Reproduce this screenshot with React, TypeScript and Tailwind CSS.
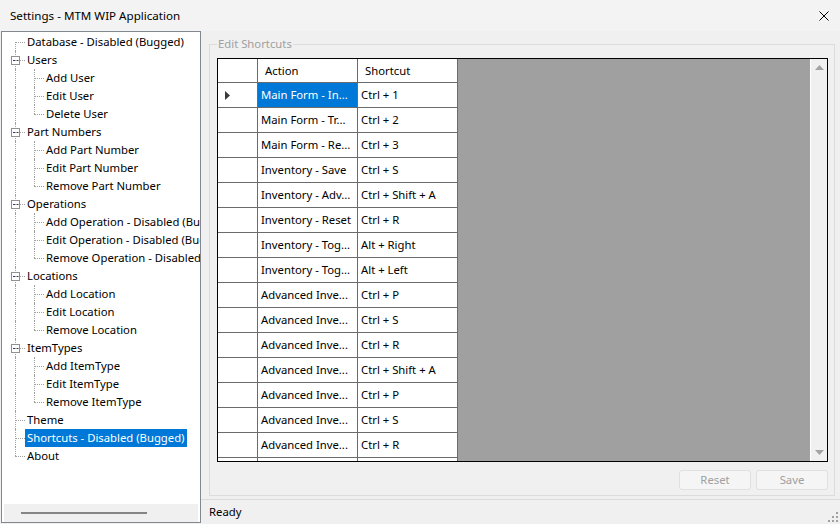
import React from 'react'

type Node = { label: string; children?: string[]; selected?: boolean }

const tree: Node[] = [
  { label: 'Database - Disabled (Bugged)' },
  { label: 'Users', children: ['Add User', 'Edit User', 'Delete User'] },
  { label: 'Part Numbers', children: ['Add Part Number', 'Edit Part Number', 'Remove Part Number'] },
  {
    label: 'Operations',
    children: [
      'Add Operation - Disabled (Bugged)',
      'Edit Operation - Disabled (Bugged)',
      'Remove Operation - Disabled (Bugged)',
    ],
  },
  { label: 'Locations', children: ['Add Location', 'Edit Location', 'Remove Location'] },
  { label: 'ItemTypes', children: ['Add ItemType', 'Edit ItemType', 'Remove ItemType'] },
  { label: 'Theme' },
  { label: 'Shortcuts - Disabled (Bugged)', selected: true },
  { label: 'About' },
]

const shortcuts = [
  ['Main Form - In...', 'Ctrl + 1'],
  ['Main Form - Tr...', 'Ctrl + 2'],
  ['Main Form - Re...', 'Ctrl + 3'],
  ['Inventory - Save', 'Ctrl + S'],
  ['Inventory - Adv...', 'Ctrl + Shift + A'],
  ['Inventory - Reset', 'Ctrl + R'],
  ['Inventory - Tog...', 'Alt + Right'],
  ['Inventory - Tog...', 'Alt + Left'],
  ['Advanced Inve...', 'Ctrl + P'],
  ['Advanced Inve...', 'Ctrl + S'],
  ['Advanced Inve...', 'Ctrl + R'],
  ['Advanced Inve...', 'Ctrl + Shift + A'],
  ['Advanced Inve...', 'Ctrl + P'],
  ['Advanced Inve...', 'Ctrl + S'],
  ['Advanced Inve...', 'Ctrl + R'],
  ['', ''],
]

// dotted connector pieces, drawn over each tree row
function VLine({ x, top }: { x: number; top: 'full' | 'half' | 'lower' }) {
  const cls =
    top === 'full'
      ? 'top-0 h-[18px]'
      : top === 'half'
        ? 'top-0 h-[9px]'
        : 'top-[9px] h-[9px]'
  return (
    <span
      className={`absolute w-0 border-l border-dotted border-[#a0a0a0] ${cls}`}
      style={{ left: x }}
    />
  )
}

function ExpandBox() {
  return (
    <span className="absolute left-[9px] top-[5px] w-[9px] h-[9px] border border-[#919191] bg-white flex items-center justify-center">
      <span className="w-[5px] h-px bg-[#2c3e66]" />
    </span>
  )
}

function TreeRow({
  depth,
  label,
  selected,
  lines,
}: {
  depth: 0 | 1
  label: string
  selected?: boolean
  lines: React.ReactNode
}) {
  return (
    <div className="relative h-[18px] flex items-center whitespace-nowrap">
      {lines}
      <span
        className={`absolute top-[9px] w-[10px] border-t border-dotted border-[#a0a0a0] ${depth === 0 ? 'left-[13px]' : 'left-[32px]'}`}
      />
      <span
        className={`${depth === 0 ? 'ml-[23px]' : 'ml-[42px]'} h-[18px] leading-[18px] px-[2px] ${selected ? 'bg-[#0078d7] text-white' : 'text-black'}`}
      >
        {label}
      </span>
    </div>
  )
}

function Tree() {
  const rows: React.ReactNode[] = []
  tree.forEach((node, i) => {
    const first = i === 0
    const last = i === tree.length - 1
    rows.push(
      <TreeRow
        key={node.label}
        depth={0}
        label={node.label}
        selected={node.selected}
        lines={
          <>
            <VLine x={13} top={first ? 'lower' : last ? 'half' : 'full'} />
            {node.children && <ExpandBox />}
          </>
        }
      />,
    )
    node.children?.forEach((c, j) => {
      const lastChild = j === node.children!.length - 1
      rows.push(
        <TreeRow
          key={node.label + c}
          depth={1}
          label={c}
          lines={
            <>
              <VLine x={13} top="full" />
              <VLine x={32} top={lastChild ? 'half' : 'full'} />
            </>
          }
        />,
      )
    })
  })

  return (
    <div className="ml-px w-[200px] h-[492px] border border-[#828790] bg-white flex flex-col overflow-hidden">
      <div className="flex-1 pt-px">{rows}</div>
      <div className="h-[18px] mx-[2px] bg-[#f0f0f0] flex items-center">
        <span className="ml-[17px] w-[126px] h-[2px] bg-[#858585]" />
      </div>
    </div>
  )
}

function Grid() {
  const cell = 'border-r border-[#6b6b6b] overflow-hidden whitespace-nowrap'
  return (
    <div className="h-[404px] border border-black flex bg-[#a0a0a0]">
      <div className="w-[240px] bg-white overflow-hidden flex flex-col">
        <div className="h-[24px] shrink-0 flex border-b border-[#6b6b6b]">
          <div className={`w-[40px] ${cell}`} />
          <div className={`w-[100px] ${cell} pl-[7px] leading-[23px]`}>Action</div>
          <div className={`w-[100px] ${cell} pl-[7px] leading-[23px]`}>Shortcut</div>
        </div>
        {shortcuts.map(([a, s], i) => (
          <div key={i} className="h-[25px] shrink-0 flex border-b border-[#6b6b6b]">
            <div className={`w-[40px] ${cell} flex items-center pl-[7px]`}>
              {i === 0 && (
                <svg width="5" height="9" viewBox="0 0 5 9">
                  <polygon points="0,0 5,4.5 0,9" fill="#3a3a3a" />
                </svg>
              )}
            </div>
            <div
              className={`w-[100px] ${cell} pl-[3px] leading-[24px] ${i === 0 ? 'bg-[#0078d7] text-white' : ''}`}
            >
              {a}
            </div>
            <div className={`w-[100px] ${cell} pl-[3px] leading-[24px]`}>{s}</div>
          </div>
        ))}
      </div>
      <div className="flex-1" />
      <div className="w-[17px] bg-[#f0f0f0] border-l border-white flex flex-col items-center justify-between py-[6px]">
        <svg width="9" height="5" viewBox="0 0 9 5">
          <polygon points="0,5 4.5,0 9,5" fill="#a3a3a3" />
        </svg>
        <svg width="9" height="5" viewBox="0 0 9 5">
          <polygon points="0,0 4.5,5 9,0" fill="#a3a3a3" />
        </svg>
      </div>
    </div>
  )
}

export default function App() {
  return (
    <div className="w-[840px] h-[524px] bg-[#f0f0f0] flex flex-col overflow-hidden text-[11.3px] font-['Segoe_UI','Noto_Sans',sans-serif] text-black">
      <div className="h-[31px] shrink-0 bg-[#f3f3f3] flex items-center justify-between pl-[10px] pr-[11px]">
        <span className="text-[11.6px] text-black">Settings - MTM WIP Application</span>
        <svg width="10" height="10" viewBox="0 0 10 10">
          <path d="M0.5 0.5 L9.5 9.5 M9.5 0.5 L0.5 9.5" stroke="#000" strokeWidth="1" />
        </svg>
      </div>
      <div className="flex-1 flex min-h-0">
        <Tree />
        <div className="flex-1 flex flex-col">
          <div className="relative mt-[13px] ml-[8px] mr-[5px] h-[452px] border border-[#dcdcdc] pt-[13px] pl-[7px] pr-[6px]">
            <span className="absolute -top-[9px] left-[7px] px-px bg-[#f0f0f0] text-[#a0a0a0] leading-[15px]">
              Edit Shortcuts
            </span>
            <Grid />
            <div className="flex justify-end gap-[5px] mt-[8px]">
              <button className="w-[72px] h-[20px] border border-[#e0e0e0] bg-[#f5f5f5] rounded-[3px] text-[#a0a0a0]">
                Reset
              </button>
              <button className="w-[72px] h-[20px] border border-[#e0e0e0] bg-[#f5f5f5] rounded-[3px] text-[#a0a0a0]">
                Save
              </button>
            </div>
          </div>
          <div className="mt-[3px] flex-1 border-t border-[#dadada] flex items-center justify-between pl-[8px] pr-[2px]">
            <span>Ready</span>
            <svg width="10" height="10" viewBox="0 0 10 10" className="self-end mb-[2px]">
              {[
                [8, 0],
                [8, 4],
                [4, 4],
                [8, 8],
                [4, 8],
                [0, 8],
              ].map(([x, y]) => (
                <rect key={`${x}-${y}`} x={x} y={y} width="2" height="2" fill="#a0a0a0" />
              ))}
            </svg>
          </div>
        </div>
      </div>
    </div>
  )
}
